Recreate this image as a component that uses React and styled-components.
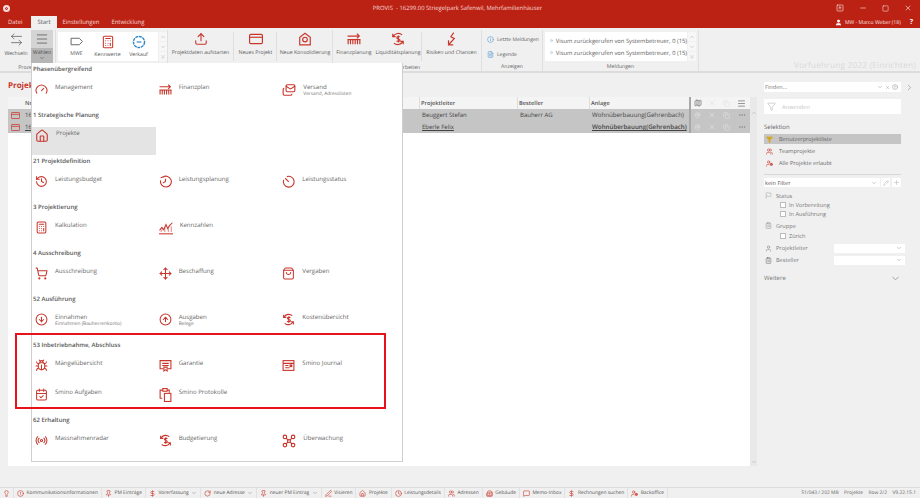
import styled, { createGlobalStyle } from "styled-components";
import {
	ArrowLeftRight, Bug, Calculator, CalendarCheck, ChevronDown, ChevronRight, ChevronUp, ChevronsDown,
	CircleAlert, CircleArrowDown, CircleArrowUp, CircleHelp, Clock, Copy, Ellipsis, Filter, Flag, Gauge, History, House,
	Info, Lightbulb, Map, MapPin, Mails, Menu, MessageSquare, Minus, Move, Pencil, Plus, Radio, ShoppingBag, ShoppingCart, Square,
	SquareArrowUp, Upload, User, Users, X, DollarSign, Pin, Building2, PenLine, UserCog, ClipboardList, RotateCw, FileText,
} from "lucide-react";

const RED = "#bc2214";
const ICON = "#c9352b";

const Global = createGlobalStyle`
	html, body {
		margin: 0;
		padding: 0;
		background: #f0f0f0;
	}
	*, *::after {
		box-sizing: border-box;
	}
`;
const Page = styled.div`
	position: relative;
	width: 920px;
	height: 498px;
	overflow: hidden;
	display: flex;
	flex-direction: column;
	background: #f0f0f0;
	color: #5c5c5c;
	font-family: "Open Sans", "Liberation Sans", sans-serif;
	font-size: 5.6px;
	text-rendering: geometricPrecision;
`;
const TitleBar = styled.div`
	height: 28px;
	background: ${RED};
	color: #f3d9d5;
	display: flex;
	flex-direction: column;
`;
const TitleRow = styled.div`
	height: 16px;
	display: grid;
	grid-template-columns: 100px 1fr 100px;
	align-items: center;
	padding: 0 8px 0 3px;
`;
const Logo = styled.span`
	width: 7px;
	height: 7px;
	border-radius: 50%;
	background: #f6dcd8;
	border: 2px solid #f6dcd8;
	box-shadow: inset 0 0 0 1px ${RED};
`;
const WindowTitle = styled.div`
	text-align: center;
	font-size: 5.9px;
`;
const WindowButtons = styled.div`
	display: flex;
	justify-content: flex-end;
	align-items: center;
	gap: 15px;
	color: #f3d9d5;
`;
const TabRow = styled.div`
	height: 12px;
	display: flex;
	align-items: flex-end;
	justify-content: space-between;
	padding: 0 7px 0 0;
`;
const Tabs = styled.div`
	display: flex;
	padding-left: 2px;
`;
const Tab = styled.div`
	height: 12px;
	padding: 0 6px;
	line-height: 12px;
	font-size: 5.9px;
	background: ${(p) => (p.$active ? "#f0f0f0" : "transparent")};
	color: ${(p) => (p.$active ? "#555" : "#f3d9d5")};
	margin-left: ${(p) => p.$gap || 0}px;
`;
const UserBox = styled.div`
	display: flex;
	align-items: center;
	gap: 3px;
	font-size: 5.1px;
	color: #f6e3e0;
	padding-bottom: 1px;
`;
const Help = styled.span`
	margin-left: 6px;
	font-weight: 700;
	font-size: 7px;
	color: #fff;
`;
const Ribbon = styled.div`
	height: 45px;
	display: flex;
	border-bottom: 2px solid #dcdcdc;
	padding-top: 2px;
	font-size: 5.2px;
`;
const Group = styled.div`
	width: ${(p) => p.$w}px;
	border-right: 1px solid #e0e0e0;
	display: flex;
	flex-direction: column;
`;
const GroupBody = styled.div`
	height: 33px;
	display: flex;
	align-items: flex-start;
	padding-left: ${(p) => p.$pad || 0}px;
`;
const GroupLabel = styled.div`
	text-align: center;
	line-height: 9px;
	font-size: 5.2px;
	color: #666;
`;
const RibbonButton = styled.div`
	width: ${(p) => p.$w}px;
	height: 33px;
	flex: none;
	text-align: center;
	svg {
		display: block;
		margin: 2px auto 2px;
	}
`;
const ButtonText = styled.div`
	line-height: 8px;
	white-space: nowrap;
`;
const PickedButton = styled.div`
	width: 22px;
	height: 33px;
	margin-left: 3px;
	background: #d4d4d4;
	text-align: center;
	svg {
		display: block;
		margin: 2px auto;
	}
`;
const PickedLabel = styled.div`
	height: 15px;
	background: #b6b6b6;
	line-height: 8px;
	color: #4d4d4d;
	svg {
		margin: -1px auto 0;
	}
`;
const ButtonSep = styled.div`
	width: 1px;
	height: 29px;
	margin: 2px 1px 0 0;
	background: #dedede;
	flex: none;
`;
const Gallery = styled.div`
	width: 100px;
	height: 29px;
	margin-top: 2px;
	padding-left: 3px;
	background: #fff;
	display: flex;
	flex: none;
`;
const GalleryItem = styled.div`
	width: 31px;
	padding-top: 3px;
	text-align: center;
	line-height: 8px;
	color: #555;
	svg {
		display: block;
		margin: 0 auto 1px;
	}
`;
const Scroller = styled.div`
	width: 8px;
	height: 29px;
	margin: 2px 0 0 1px;
	display: flex;
	flex-direction: column;
	gap: 1px;
	flex: none;
`;
const ScrollBtn = styled.div`
	flex: 1;
	background: #f7f7f7;
	color: #aaa;
	display: flex;
	align-items: center;
	justify-content: center;
`;
const LinkStack = styled.div`
	padding-top: 2px;
`;
const SmallLink = styled.div`
	display: flex;
	align-items: center;
	gap: 3px;
	height: 15px;
	font-size: 5px;
	white-space: nowrap;
`;
const MessageBox = styled.div`
	width: 142px;
	height: 29px;
	margin-top: 2px;
	background: #fff;
	display: flex;
	flex-direction: column;
	justify-content: center;
	gap: 5px;
	flex: none;
`;
const Message = styled.div`
	display: flex;
	align-items: center;
	gap: 3px;
	padding-left: 5px;
	line-height: 6px;
	font-size: 5.8px;
	white-space: nowrap;
`;
const Environment = styled.div`
	flex: 1;
	display: flex;
	align-items: flex-end;
	justify-content: flex-end;
	padding-right: 4px;
	font-size: 8.2px;
	line-height: 10px;
	color: #d9d9d9;
	letter-spacing: 0.25px;
	white-space: nowrap;
`;
const Main = styled.div`
	height: 414px;
	display: flex;
`;
const Content = styled.div`
	width: 757px;
	flex: none;
	padding-left: 8px;
	display: flex;
	flex-direction: column;
`;
const Heading = styled.div`
	height: 24px;
	padding-top: 7px;
	line-height: 12px;
	font-size: 8px;
	font-weight: 700;
	color: #c8352b;
`;
const TableWrap = styled.div`
	height: 369px;
	display: flex;
`;
const Table = styled.div`
	width: 742px;
	background: #fff;
`;
const TableRow = styled.div`
	display: grid;
	grid-template-columns: 14px 397px 98px 72px 100px repeat(4, 15px);
	height: ${(p) => (p.$head ? 12 : 12.2)}px;
	background: ${(p) => (p.$head ? "#f4f4f4" : "#c5c5c5")};
	font-size: ${(p) => (p.$head ? 5.7 : 6)}px;
	font-weight: ${(p) => (p.$head ? 600 : 400)};
	color: ${(p) => (p.$head ? "#555" : "#444")};
	align-items: center;
`;
const Cell = styled.div`
	height: 100%;
	line-height: 12px;
	padding-left: ${(p) => (p.$line ? 1 : 3)}px;
	white-space: nowrap;
	overflow: hidden;
	border-left: ${(p) => (p.$line ? "1px solid #ddd" : "none")};
	text-decoration: ${(p) => (p.$link ? "underline" : "none")};
`;
const PlantCell = styled(Cell)`
	font-size: 6.2px;
	font-weight: ${(p) => (p.$link ? 600 : 400)};
`;
const IconCell = styled.div`
	height: 100%;
	display: flex;
	align-items: center;
	justify-content: center;
	color: ${(p) => p.$color || "#e3e3e3"};
	border-left: ${(p) => (p.$line ? "2px solid #a8a8a8" : "none")};
`;
const ScrollTrack = styled.div`
	width: 7px;
	background: #e9e9e9;
	color: #a8a8a8;
	display: flex;
	flex-direction: column;
	justify-content: space-between;
	align-items: center;
	padding: 13px 0 1px;
`;
const Side = styled.div`
	flex: 1;
	padding: 9px 0 0 7px;
	display: flex;
	flex-direction: column;
	color: #666;
`;
const SearchRow = styled.div`
	display: flex;
	align-items: center;
	gap: 4px;
	height: 10px;
`;
const Field = styled.div`
	width: ${(p) => p.$w || 137}px;
	height: ${(p) => p.$h || 10}px;
	background: #fff;
	display: flex;
	align-items: center;
	justify-content: space-between;
	padding: 0 1px;
	color: ${(p) => p.$color || "#777"};
	flex: none;
`;
const FieldIcons = styled.span`
	display: flex;
	align-items: center;
	gap: 2px;
	color: #999;
	padding-right: 2px;
`;
const ApplyBox = styled.div`
	width: 137px;
	height: 15px;
	margin-top: 7px;
	background: #fff;
	display: flex;
	align-items: center;
	gap: 6px;
	padding-left: 3px;
	color: #c4c4c4;
`;
const SideTitle = styled.div`
	margin-top: 9px;
	line-height: 8px;
	font-size: 6px;
`;
const Choice = styled.div`
	width: 137px;
	height: 10px;
	margin-top: ${(p) => p.$top || 2}px;
	display: flex;
	align-items: center;
	gap: 6px;
	padding-left: 2px;
	background: ${(p) => (p.$active ? "#c5c5c5" : "transparent")};
`;
const SideRule = styled.div`
	width: 137px;
	height: 1px;
	background: #d8d8d8;
	margin: 6px 0 3px;
`;
const FilterRow = styled.div`
	display: flex;
	gap: 1px;
	height: 9px;
`;
const ToolBox = styled.div`
	width: 9px;
	height: 9px;
	background: #fff;
	color: #bbb;
	display: flex;
	align-items: center;
	justify-content: center;
	margin-left: ${(p) => p.$gap || 0}px;
`;
const FilterHead = styled.div`
	display: flex;
	align-items: center;
	gap: 4px;
	height: 9px;
	margin-top: ${(p) => p.$top || 0}px;
	padding-left: 1px;
	color: #777;
`;
const CheckRow = styled.div`
	display: flex;
	align-items: center;
	gap: 3px;
	height: 8.5px;
	padding-left: 16px;
	margin-top: ${(p) => p.$top || 0}px;
	color: #777;
`;
const Box = styled.span`
	width: 6px;
	height: 6px;
	background: #fff;
	border: 1px solid #bbb;
`;
const PickRow = styled.div`
	display: flex;
	align-items: center;
	height: 9px;
	margin-top: 3px;
	padding-left: 1px;
	gap: 4px;
	color: #777;
`;
const PickName = styled.span`
	width: 54px;
`;
const MoreRow = styled.div`
	width: 137px;
	margin-top: 8px;
	display: flex;
	justify-content: space-between;
	align-items: center;
	font-size: 6px;
	color: #777;
`;
const StatusBar = styled.div`
	height: 11px;
	border-top: 1px solid #dcdcdc;
	display: flex;
	align-items: center;
	justify-content: space-between;
	padding-right: 4px;
	font-size: 4.9px;
`;
const StatusLeft = styled.div`
	display: flex;
	align-items: center;
	height: 100%;
`;
const StatusItem = styled.div`
	display: flex;
	align-items: center;
	gap: 2.5px;
	height: 100%;
	width: ${(p) => (p.$w ? `${p.$w}px` : "auto")};
	padding: 0 3px;
	border-right: 1px solid #e2e2e2;
	white-space: nowrap;
	color: #555;
`;
const StatusRight = styled.div`
	display: flex;
	gap: 5.5px;
	color: #666;
`;
const Dropdown = styled.div`
	position: absolute;
	left: 31px;
	top: 63px;
	width: 372px;
	height: 399px;
	background: #fff;
	border: 1px solid #cfcfcf;
	border-top: none;
`;
const Section = styled.section`
	position: relative;
	&::after {
		content: ${(p) => (p.$marked ? '""' : "none")};
		position: absolute;
		left: -17px;
		top: -6px;
		width: 371px;
		height: 76px;
		border: 2px solid #e8121a;
	}
`;
const SectionTitle = styled.div`
	height: 18px;
	line-height: 13px;
	padding-left: 1px;
	font-size: 6px;
	font-weight: 600;
	color: #555;
`;
const ItemGrid = styled.div`
	display: grid;
	grid-template-columns: repeat(3, 123.67px);
	grid-auto-rows: 28px;
	row-gap: 1px;
`;
const Item = styled.div`
	display: flex;
	gap: 7px;
	padding: 2px 0 0 3px;
	background: ${(p) => (p.$active ? "#e4e4e4" : "transparent")};
	color: #666;
	svg {
		flex: none;
	}
`;
const ItemName = styled.div`
	font-size: 6.1px;
	line-height: 8px;
`;
const ItemNote = styled.div`
	font-size: 4.8px;
	line-height: 7px;
	color: #777;
`;

// Zeichnungen, die es in den Icon-Paketen nicht gibt
function FinanceIcon({ size = 14 }) {
	return (
		<svg width={size} height={size} viewBox="0 0 24 24" fill="none" stroke={ICON} strokeWidth="2">
			<path d="M1 7h19M17 3l4 4-4 4" />
			<path d="M2 13v8M6 13v8M10 13v8M14 13v8M18 13v8M22 13v8" />
			<path d="M1 13h22" />
		</svg>
	);
}
function CycleMoney({ size = 14, color = ICON }) {
	return (
		<svg width={size} height={size} viewBox="0 0 24 24" fill="none" stroke={color} strokeWidth="2">
			<path d="M19 5a10 10 0 0 0-15 2M5 19a10 10 0 0 0 15-2M3 3v5h5M21 21v-5h-5" />
			<path d="M15.500 8.500c-1-1-5.500-1.500-5.500 1.200 0 3 5.500 1.600 5.500 4.500 0 2.500-4.500 2.200-6 1M12.500 6v12" />
		</svg>
	);
}
function ProjectCard({ size = 14, color = ICON }) {
	return (
		<svg width={size} height={size} viewBox="0 0 24 24" fill="none" stroke={color} strokeWidth="2">
			<rect x="1" y="4" width="22" height="16" rx="2" />
			<path d="M1 9h22" />
		</svg>
	);
}
function HouseCam({ size = 14 }) {
	return (
		<svg width={size} height={size} viewBox="0 0 24 24" fill="none" stroke={ICON} strokeWidth="2">
			<path d="M3 22V9l9-7 9 7v13z" />
			<circle cx="12" cy="13" r="4" />
		</svg>
	);
}
function TagIcon() {
	return (
		<svg width="13" height="13" viewBox="0 0 24 24" fill="none" stroke="#666" strokeWidth="1.800">
			<path d="M2 6h15l6 6-6 6H2z" />
		</svg>
	);
}
function GearBadge() {
	return (
		<svg width="14" height="14" viewBox="0 0 24 24" fill="none" stroke="#2f86c9" strokeWidth="2.400">
			<circle cx="12" cy="12" r="9.500" strokeDasharray="5 1.200" />
			<path d="M8 12h8" strokeWidth="2" />
		</svg>
	);
}
function RiskBolt() {
	return (
		<svg width="14" height="14" viewBox="0 0 24 24" fill="none" stroke={ICON} strokeWidth="2">
			<path d="M15 1l-5 7 6 3-9 10" />
			<path d="M6 14v8h8" />
		</svg>
	);
}
function Certificate() {
	return (
		<svg width="13" height="13" viewBox="0 0 24 24" fill="none" stroke={ICON} strokeWidth="2">
			<path d="M8 18H2V3h20v15h-6" />
			<path d="M6 8h12M6 12h12M9 15h6v7l-3-2-3 2z" />
		</svg>
	);
}
function Journal() {
	return (
		<svg width="13" height="13" viewBox="0 0 24 24" fill="none" stroke={ICON} strokeWidth="2">
			<rect x="2" y="3" width="20" height="18" />
			<path d="M2 8h20M6 12h6M6 16h8" />
			<rect x="15" y="11" width="3" height="3" fill={ICON} />
		</svg>
	);
}
function Pages() {
	return (
		<svg width="13" height="14" viewBox="0 0 24 26" fill="none" stroke={ICON} strokeWidth="2">
			<path d="M6 19H2V4h5M15 4h4v5" />
			<rect x="7" y="1" width="8" height="5" />
			<rect x="10" y="10" width="12" height="15" />
		</svg>
	);
}
function Nodes() {
	return (
		<svg width="14" height="14" viewBox="0 0 24 24" fill="none" stroke={ICON} strokeWidth="2">
			<circle cx="5" cy="5" r="3" />
			<circle cx="19" cy="5" r="3" />
			<circle cx="5" cy="19" r="3" />
			<circle cx="19" cy="19" r="3" />
			<circle cx="12" cy="12" r="2.500" />
			<path d="M7 7l3 3M17 7l-3 3M7 17l3-3M17 17l-3-3" />
		</svg>
	);
}
function RoundArrow() {
	return (
		<svg width="13" height="13" viewBox="0 0 24 24" fill="none" stroke={ICON} strokeWidth="2">
			<path d="M7 4a10 10 0 1 1-4 6" />
			<path d="M8 3.500 3 5M12 7v5l-5 3" />
		</svg>
	);
}
function StatusDial() {
	return (
		<svg width="13" height="13" viewBox="0 0 24 24" fill="none" stroke={ICON} strokeWidth="2">
			<path d="M9 3a10 10 0 1 1-6 6" />
			<path d="M12.500 12.500 6 6" />
		</svg>
	);
}
function Spikes() {
	return (
		<svg width="14" height="14" viewBox="0 0 24 24" fill="none" stroke={ICON} strokeWidth="1.800">
			<path d="M1 16l4-5 3 4 4-9 3 7 3-5 5-5" />
			<path d="M3 19l3-5M10 19V10M16 19v-6M21 19V9" strokeWidth="1" />
			<path d="M0 22h24" />
		</svg>
	);
}

const lu = (C, size = 13) => <C size={size} color={ICON} strokeWidth={1.9} />;

const sections = [
	{ title: "Phasenübergreifend", items: [
		{ name: "Management", icon: lu(Gauge) },
		{ name: "Finanzplan", icon: <FinanceIcon size={13} /> },
		{ name: "Versand", note: "Versand, Adresslisten", icon: lu(Mails, 14) },
	] },
	{ title: "1 Strategische Planung", items: [
		{ name: "Projekte", icon: lu(House, 14), active: true },
	] },
	{ title: "21 Projektdefinition", items: [
		{ name: "Leistungsbudget", icon: lu(History) },
		{ name: "Leistungsplanung", icon: <RoundArrow /> },
		{ name: "Leistungsstatus", icon: <StatusDial /> },
	] },
	{ title: "3 Projektierung", items: [
		{ name: "Kalkulation", icon: lu(Calculator) },
		{ name: "Kennzahlen", icon: <Spikes /> },
	] },
	{ title: "4 Ausschreibung", items: [
		{ name: "Ausschreibung", icon: lu(ShoppingCart) },
		{ name: "Beschaffung", icon: lu(Move) },
		{ name: "Vergaben", icon: lu(ShoppingBag) },
	] },
	{ title: "52 Ausführung", items: [
		{ name: "Einnahmen", note: "Einnahmen (Bauherrenkonto)", icon: lu(CircleArrowDown) },
		{ name: "Ausgaben", note: "Belege", icon: lu(CircleArrowUp) },
		{ name: "Kostenübersicht", icon: <CycleMoney size={13} /> },
	] },
	{ title: "53 Inbetriebnahme, Abschluss", marked: true, items: [
		{ name: "Mängelübersicht", icon: lu(Bug) },
		{ name: "Garantie", icon: <Certificate /> },
		{ name: "Smino Journal", icon: <Journal /> },
		{ name: "Smino Aufgaben", icon: lu(CalendarCheck) },
		{ name: "Smino Protokolle", icon: <Pages /> },
	] },
	{ title: "62 Erhaltung", items: [
		{ name: "Massnahmenradar", icon: lu(Radio) },
		{ name: "Budgetierung", icon: <CycleMoney size={13} /> },
		{ name: "Überwachung", icon: <Nodes /> },
	] },
];

const sicon = (C) => <C size={7} color={ICON} strokeWidth={2} />;
const statusItems = [
	{ name: "", icon: sicon(Lightbulb), w: 14 },
	{ name: "Kommunikationsinformationen", icon: sicon(CircleAlert) },
	{ name: "PM Einträge", icon: sicon(Pin) },
	{ name: "Vorerfassung", icon: sicon(DollarSign), more: true },
	{ name: "neue Adresse", icon: sicon(RotateCw), more: true },
	{ name: "neuer PM Eintrag", icon: sicon(Pin), more: true },
	{ name: "Visieren", icon: sicon(PenLine) },
	{ name: "Projekte", icon: sicon(House) },
	{ name: "Leistungsdetails", icon: sicon(Clock) },
	{ name: "Adressen", icon: sicon(Users) },
	{ name: "Gebäude", icon: sicon(Building2) },
	{ name: "Memo-Inbox", icon: sicon(MessageSquare) },
	{ name: "Rechnungen suchen", icon: sicon(DollarSign) },
	{ name: "Backoffice", icon: sicon(UserCog) },
];

function ScrollButtons() {
	return (
		<Scroller>
			<ScrollBtn><ChevronUp size={6} /></ScrollBtn>
			<ScrollBtn><ChevronDown size={6} /></ScrollBtn>
			<ScrollBtn><ChevronsDown size={6} /></ScrollBtn>
		</Scroller>
	);
}

function ProjectRow({ leader, orderer, link }) {
	return (
		<TableRow>
			<IconCell $color={ICON}><ProjectCard size={9} /></IconCell>
			<Cell $link={link}>16299.00</Cell>
			<Cell $link={link}>{leader}</Cell>
			<Cell>{orderer}</Cell>
			<PlantCell $link={link}>Wohnüberbauung(Gehrenbach)</PlantCell>
			<IconCell $line><MapPin size={7} /></IconCell>
			<IconCell><X size={8} /></IconCell>
			<IconCell><Copy size={7} /></IconCell>
			<IconCell $color="#888"><Ellipsis size={8} /></IconCell>
		</TableRow>
	);
}

export default function App() {
	return (
		<Page>
			<Global />
			<TitleBar>
				<TitleRow>
					<Logo />
					<WindowTitle>PROVIS &nbsp;- 16299.00 Striegelpark Safenwil, Mehrfamilienhäuser</WindowTitle>
					<WindowButtons>
						<SquareArrowUp size={8} />
						<Minus size={8} />
						<Square size={7} />
						<X size={8} />
					</WindowButtons>
				</TitleRow>
				<TabRow>
					<Tabs>
						<Tab>Datei</Tab>
						<Tab $active $gap={3}>Start</Tab>
						<Tab>Einstellungen</Tab>
						<Tab>Entwicklung</Tab>
					</Tabs>
					<UserBox>
						<User size={7} fill="#fff" color="#fff" />
						MW - Marco Weber (18)
						<Help>?</Help>
					</UserBox>
				</TabRow>
			</TitleBar>

			<Ribbon>
				<Group $w={56}>
					<GroupBody $pad={4}>
						<RibbonButton $w={24}>
							<ArrowLeftRight size={15} color="#666" strokeWidth={1.3} />
							<ButtonText>Wechseln</ButtonText>
						</RibbonButton>
						<PickedButton>
							<Menu size={14} color="#666" strokeWidth={1.5} />
							<PickedLabel>
								Wählen
								<ChevronDown size={6} />
							</PickedLabel>
						</PickedButton>
					</GroupBody>
					<GroupLabel>Prozess</GroupLabel>
				</Group>
				<Group $w={112}>
					<GroupBody $pad={2}>
						<Gallery>
							<GalleryItem><TagIcon />MWE</GalleryItem>
							<GalleryItem><Calculator size={14} color={ICON} strokeWidth={1.8} />Kennwerte</GalleryItem>
							<GalleryItem><GearBadge />Verkauf</GalleryItem>
						</Gallery>
						<ScrollButtons />
					</GroupBody>
					<GroupLabel>Auswahl</GroupLabel>
				</Group>
				<Group $w={165}>
					<GroupBody>
						<RibbonButton $w={65}>
							<Upload size={14} color={ICON} strokeWidth={1.9} />
							<ButtonText>Projektdaten aufstarten</ButtonText>
						</RibbonButton>
						<ButtonSep />
						<RibbonButton $w={41}>
							<ProjectCard />
							<ButtonText>Neues Projekt</ButtonText>
						</RibbonButton>
						<ButtonSep />
						<RibbonButton $w={54}>
							<HouseCam />
							<ButtonText>Neue Konsolidierung</ButtonText>
						</RibbonButton>
					</GroupBody>
					<GroupLabel>Erstellen</GroupLabel>
				</Group>
				<Group $w={149}>
					<GroupBody>
						<RibbonButton $w={42}>
							<FinanceIcon />
							<ButtonText>Finanzplanung</ButtonText>
						</RibbonButton>
						<RibbonButton $w={46}>
							<CycleMoney />
							<ButtonText>Liquiditätsplanung</ButtonText>
						</RibbonButton>
						<ButtonSep />
						<RibbonButton $w={57}>
							<RiskBolt />
							<ButtonText>Risiken und Chancen</ButtonText>
						</RibbonButton>
					</GroupBody>
					<GroupLabel>Bearbeiten</GroupLabel>
				</Group>
				<Group $w={61}>
					<GroupBody $pad={5}>
						<LinkStack>
							<SmallLink><Info size={7} color="#5a9bd0" />Letzte Meldungen</SmallLink>
							<SmallLink><FileText size={7} color="#5a9bd0" />Legende</SmallLink>
						</LinkStack>
					</GroupBody>
					<GroupLabel>Anzeigen</GroupLabel>
				</Group>
				<Group $w={156}>
					<GroupBody $pad={2}>
						<MessageBox>
							<Message><Info size={7} color="#5a9bd0" />Visum zurückgerufen von Systembetreuer, 0 (15)</Message>
							<Message><Info size={7} color="#5a9bd0" />Visum zurückgerufen von Systembetreuer, 0 (15)</Message>
						</MessageBox>
						<ScrollButtons />
					</GroupBody>
					<GroupLabel>Meldungen</GroupLabel>
				</Group>
				<Environment>Vorfuehrung 2022 (Einrichten)</Environment>
			</Ribbon>

			<Main>
				<Content>
					<Heading>Projekte</Heading>
					<TableWrap>
						<Table>
							<TableRow $head>
								<Cell />
								<Cell>Nr.</Cell>
								<Cell $line>Projektleiter</Cell>
								<Cell $line>Besteller</Cell>
								<Cell $line>Anlage</Cell>
								<IconCell $line $color="#666"><Map size={8} /></IconCell>
								<IconCell><X size={8} /></IconCell>
								<IconCell><Copy size={7} /></IconCell>
								<IconCell $color="#777"><Menu size={9} /></IconCell>
							</TableRow>
							<ProjectRow leader="Beuggert Stefan" orderer="Bauherr AG" />
							<ProjectRow leader="Eberle Felix" link />
						</Table>
						<ScrollTrack>
							<ChevronUp size={6} />
							<ChevronDown size={6} />
						</ScrollTrack>
					</TableWrap>
				</Content>

				<Side>
					<SearchRow>
						<Field>
							Finden...
							<FieldIcons>
								<ChevronDown size={6} />
								<X size={5} />
								<CircleHelp size={6} />
							</FieldIcons>
						</Field>
						<ChevronRight size={9} color="#999" />
					</SearchRow>
					<ApplyBox><Filter size={9} />Anwenden</ApplyBox>
					<SideTitle>Selektion</SideTitle>
					<Choice $active $top={3}><Filter size={7} color="#d9a520" fill="#d9a520" />Benutzerprojektliste</Choice>
					<Choice><Users size={7} color={ICON} />Teamprojekte</Choice>
					<Choice><UserCog size={7} color={ICON} />Alle Projekte erlaubt</Choice>
					<SideRule />
					<FilterRow>
						<Field $w={116} $h={9} $color="#555">
							kein Filter
							<FieldIcons><ChevronDown size={6} /></FieldIcons>
						</Field>
						<ToolBox><Pencil size={6} /></ToolBox>
						<ToolBox $gap={1}><Plus size={7} /></ToolBox>
					</FilterRow>
					<FilterHead $top={4}><Flag size={7} color="#aaa" />Status</FilterHead>
					<CheckRow $top={1}><Box />In Vorbereitung</CheckRow>
					<CheckRow><Box />In Ausführung</CheckRow>
					<FilterHead $top={3}><ClipboardList size={7} color="#999" />Gruppe</FilterHead>
					<CheckRow $top={2}><Box />Zürich</CheckRow>
					<PickRow>
						<User size={7} color="#888" />
						<PickName>Projektleiter</PickName>
						<Field $w={71} $h={9}><span /><FieldIcons><ChevronDown size={6} /></FieldIcons></Field>
					</PickRow>
					<PickRow>
						<ClipboardList size={7} color="#777" />
						<PickName>Besteller</PickName>
						<Field $w={71} $h={9}><span /><FieldIcons><ChevronDown size={6} /></FieldIcons></Field>
					</PickRow>
					<MoreRow>
						Weitere
						<ChevronDown size={11} color="#999" />
					</MoreRow>
				</Side>
			</Main>

			<StatusBar>
				<StatusLeft>
					{statusItems.map((item, i) => (
						<StatusItem key={i} $w={item.w}>
							{item.icon}
							{item.name}
							{item.more && <ChevronDown size={6} color="#888" />}
						</StatusItem>
					))}
				</StatusLeft>
				<StatusRight>
					<span>51/043 / 202 MB</span>
					<span>Projekte</span>
					<span>Row 2/2</span>
					<span>V9.22.15.1</span>
				</StatusRight>
			</StatusBar>

			<Dropdown>
				{sections.map((section) => (
					<Section key={section.title} $marked={section.marked}>
						<SectionTitle>{section.title}</SectionTitle>
						<ItemGrid>
							{section.items.map((item) => (
								<Item key={item.name} $active={item.active}>
									{item.icon}
									<div>
										<ItemName>{item.name}</ItemName>
										{item.note && <ItemNote>{item.note}</ItemNote>}
									</div>
								</Item>
							))}
						</ItemGrid>
					</Section>
				))}
			</Dropdown>
		</Page>
	);
}
